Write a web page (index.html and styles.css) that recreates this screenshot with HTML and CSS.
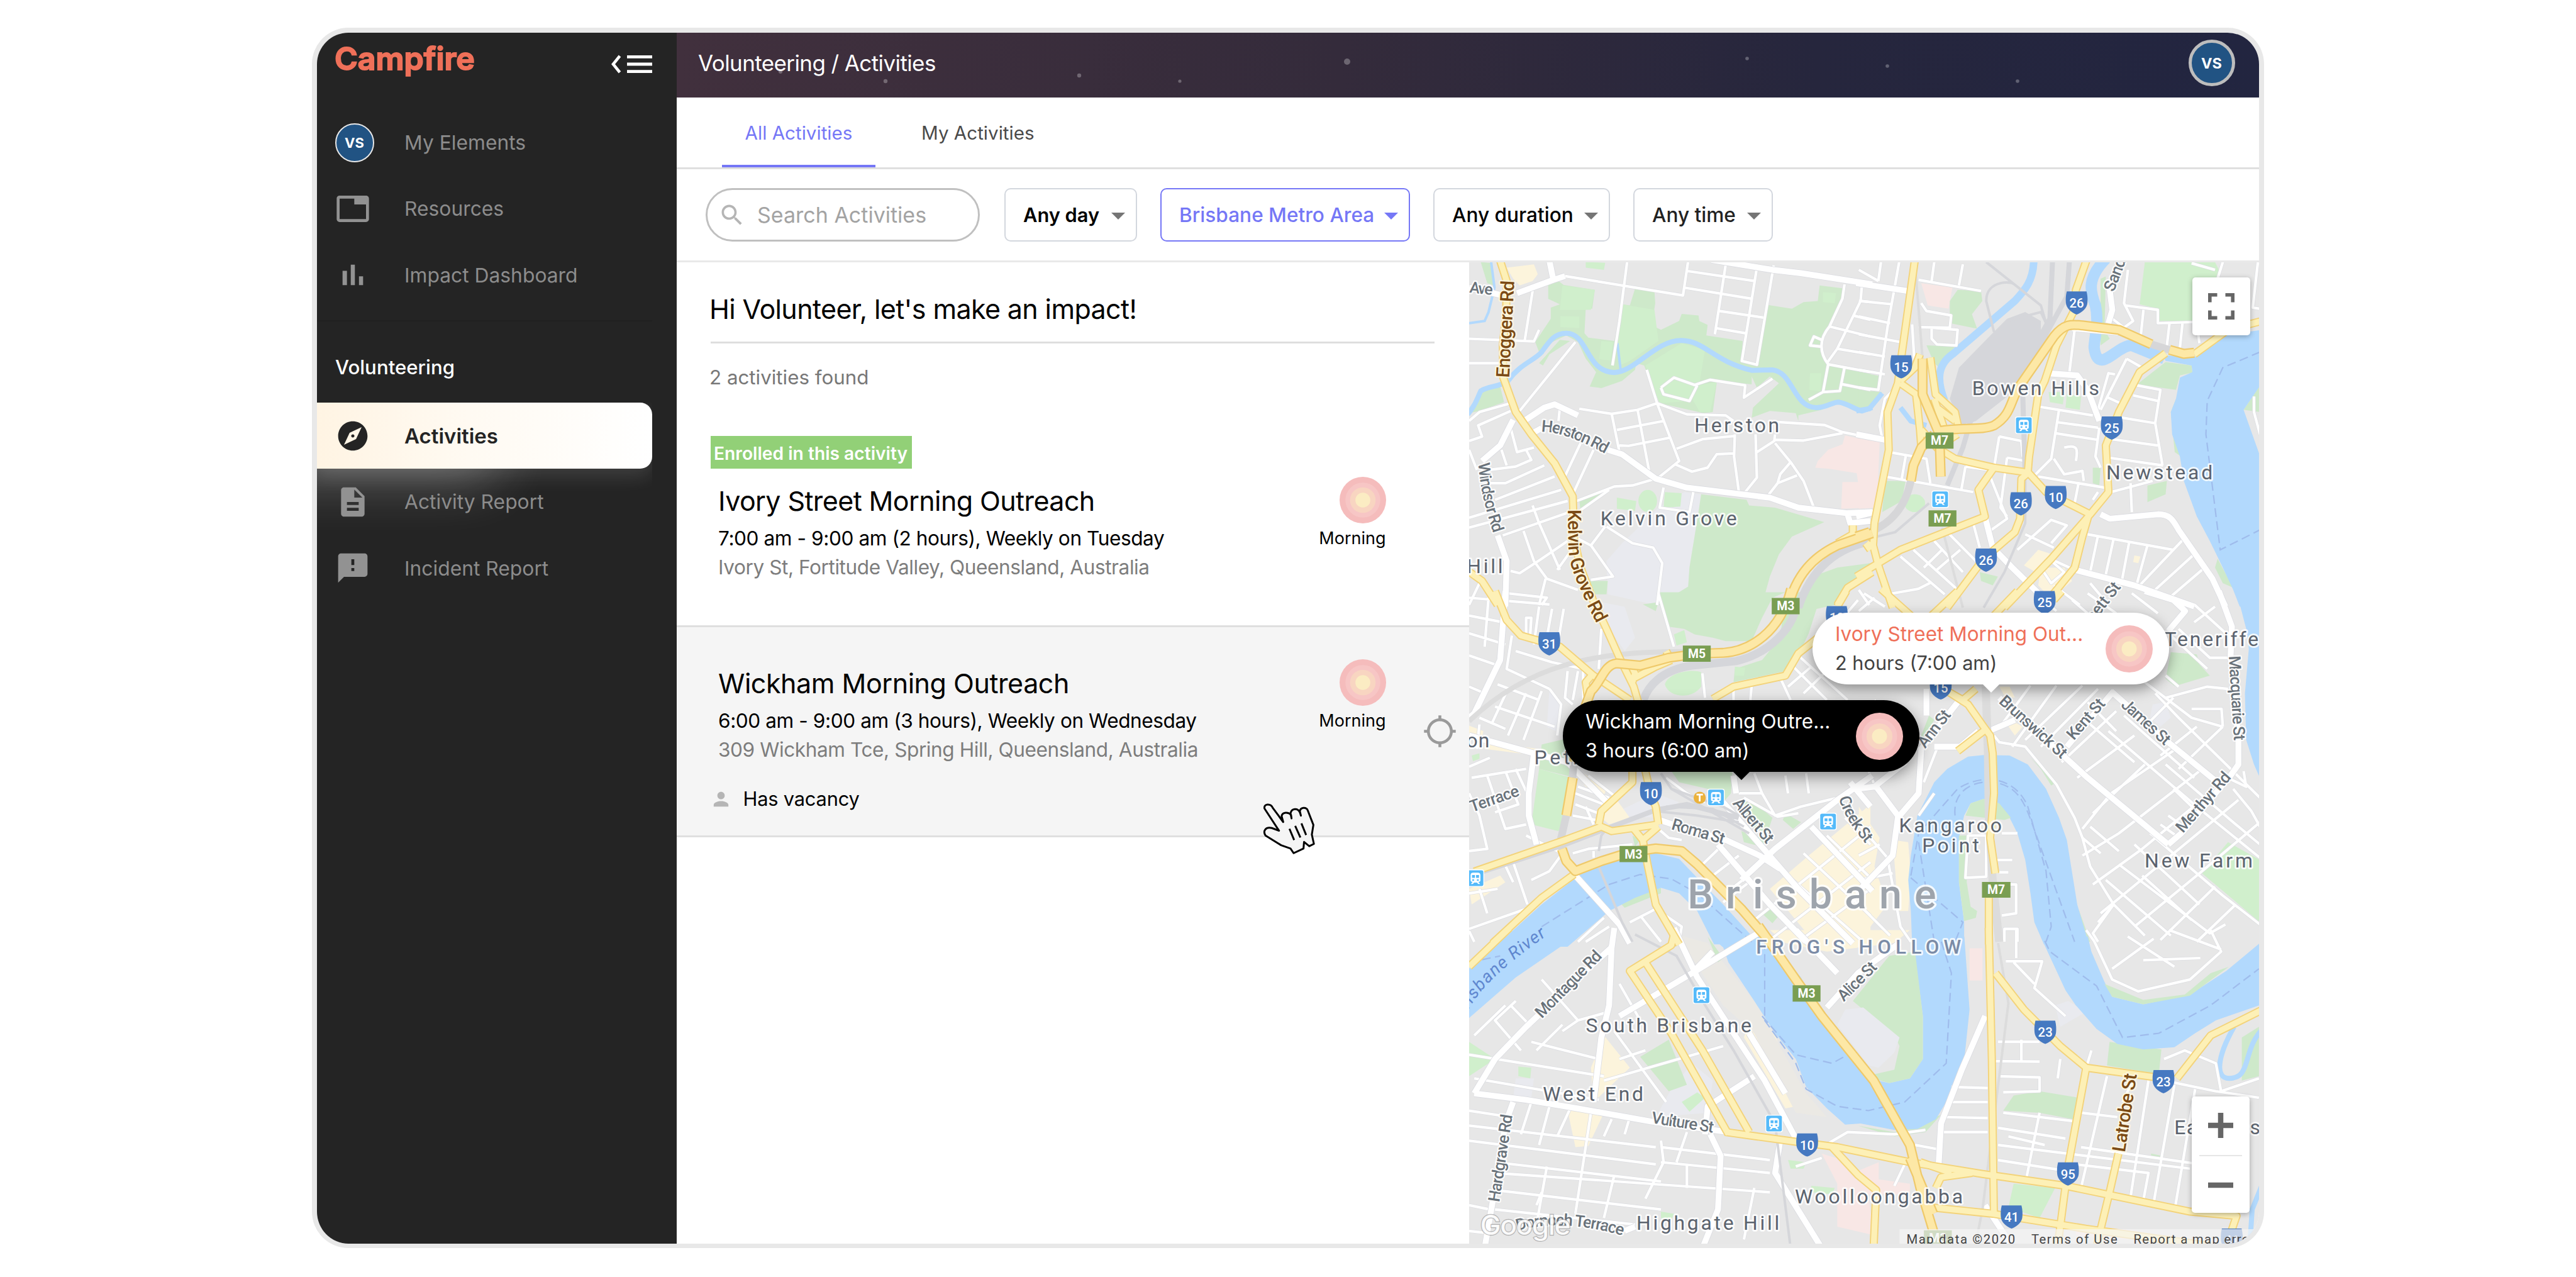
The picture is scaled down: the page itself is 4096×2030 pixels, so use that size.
FILE: index.html
```html
<!DOCTYPE html>
<html lang="en">
<head>
<meta charset="utf-8">
<title>Campfire – Activities</title>
<link rel="stylesheet" href="styles.css">
</head>
<body>
<svg class="defs" width="0" height="0" aria-hidden="true">
  <defs>
    <symbol id="sun" viewBox="0 0 100 100"><circle cx="50" cy="50" r="50" fill="#f5bcbc"/><circle cx="50" cy="50" r="37.5" fill="#f7c6c5"/><circle cx="50" cy="50" r="27.5" fill="#f8d5c1"/><circle cx="50" cy="50" r="16" fill="#fbecc3"/></symbol>
  </defs>
</svg>
<div class="window">
  <aside class="sidebar">
    <div class="brand-row">
      <span class="brand">Campfire</span>
      <svg class="collapse" viewBox="0 0 66 30"><path d="M14.5 2 L4 15 L14.5 28" fill="none" stroke="#fff" stroke-width="4.6"/><path d="M26 3.4H66M26 15H66M26 26.6H66" stroke="#fff" stroke-width="4.8"/></svg>
    </div>
    <nav class="nav">
      <a class="nav-item"><span class="slot"><span class="avatar avatar-sm">VS</span></span>My Elements</a>
      <a class="nav-item"><span class="slot"><svg class="icon" viewBox="0 0 24 24"><path d="M21 3H3c-1.1 0-2 .9-2 2v14c0 1.1.9 2 2 2h18c1.1 0 2-.9 2-2V5c0-1.1-.9-2-2-2zm0 16H3V5h10v4h8v10z"/></svg></span>Resources</a>
      <a class="nav-item"><span class="slot"><svg class="icon" viewBox="0 0 24 24"><path d="M5 9.2h3V19H5V9.2zM10.6 5h2.8v14h-2.8V5zm5.6 8H19v6h-2.8v-6z"/></svg></span>Impact Dashboard</a>
    </nav>
    <h2 class="nav-title">Volunteering</h2>
    <nav class="nav">
      <a class="nav-item active"><span class="slot"><svg class="icon" viewBox="0 0 24 24"><path d="M12 10.9c-.61 0-1.1.49-1.1 1.1s.49 1.1 1.1 1.1c.61 0 1.1-.49 1.1-1.1s-.49-1.1-1.1-1.1zM12 2C6.48 2 2 6.48 2 12s4.48 10 10 10 10-4.48 10-10S17.52 2 12 2zm2.19 12.19L6 18l3.81-8.19L18 6l-3.81 8.19z"/></svg></span>Activities</a>
      <a class="nav-item"><span class="slot"><svg class="icon" viewBox="0 0 24 24"><path d="M14 2H6c-1.1 0-1.99.9-1.99 2L4 20c0 1.1.89 2 1.99 2H18c1.1 0 2-.9 2-2V8l-6-6zm2 16H8v-2h8v2zm0-4H8v-2h8v2zm-3-5V3.500L18.500 9H13z"/></svg></span>Activity Report</a>
      <a class="nav-item"><span class="slot"><svg class="icon" viewBox="0 0 24 24"><path d="M20 2H4c-1.1 0-1.99.9-1.990 2L2 22l4-4h14c1.1 0 2-.9 2-2V4c0-1.1-.9-2-2-2zm-7 12h-2v-2h2v2zm0-4h-2V6h2v4z"/></svg></span>Incident Report</a>
    </nav>
  </aside>

  <main class="main">
    <header class="header">
      <svg class="stars" viewBox="0 0 2516 103" fill="#fff" fill-opacity=".28"><circle cx="165" cy="62" r="3"/><circle cx="332" cy="77" r="3.200"/><circle cx="640" cy="68" r="3.200"/><circle cx="800" cy="77" r="2.600"/><circle cx="1066" cy="46" r="5"/><circle cx="1702" cy="41" r="2.800"/><circle cx="1925" cy="53" r="2.800"/><circle cx="2132" cy="77" r="2.800"/></svg>
      <span class="crumbs">Volunteering / Activities</span>
      <span class="avatar avatar-lg">VS</span>
    </header>
    <div class="tabs"><a class="tab on">All Activities</a><a class="tab">My Activities</a></div>
    <div class="filters">
      <div class="search"><svg viewBox="0 0 24 24"><path d="M15.500 14h-.79l-.28-.27C15.410 12.590 16 11.110 16 9.500 16 5.910 13.090 3 9.500 3S3 5.910 3 9.500 5.910 16 9.500 16c1.610 0 3.090-.59 4.230-1.570l.27.28v.79l5 4.990L20.490 19l-4.990-5zm-6 0C7.010 14 5 11.990 5 9.500S7.010 5 9.500 5 14 7.010 14 9.500 11.990 14 9.500 14z"/></svg>Search Activities</div>
      <div class="chip day">Any day<i class="caret"></i></div>
      <div class="chip area">Brisbane Metro Area<i class="caret"></i></div>
      <div class="chip duration">Any duration<i class="caret"></i></div>
      <div class="chip time">Any time<i class="caret"></i></div>
    </div>

    <div class="content">
      <section class="list">
        <div class="intro">
          <h1>Hi Volunteer, let's make an impact!</h1>
          <p class="found">2 activities found</p>
        </div>
        <article class="card">
          <span class="badge">Enrolled in this activity</span>
          <div class="body">
            <div class="info">
              <h3>Ivory Street Morning Outreach</h3>
              <p class="when">7:00 am - 9:00 am (2 hours), Weekly on Tuesday</p>
              <p class="where">Ivory St, Fortitude Valley, Queensland, Australia</p>
            </div>
            <div class="period"><svg><use href="#sun"/></svg><span>Morning</span></div>
            <div class="locate"></div>
          </div>
        </article>
        <article class="card hover">
          <div class="body">
            <div class="info">
              <h3>Wickham Morning Outreach</h3>
              <p class="when">6:00 am - 9:00 am (3 hours), Weekly on Wednesday</p>
              <p class="where">309 Wickham Tce, Spring Hill, Queensland, Australia</p>
            </div>
            <div class="period"><svg><use href="#sun"/></svg><span>Morning</span></div>
            <div class="locate"><svg viewBox="0 0 24 24"><path d="M20.940 11c-.46-4.170-3.770-7.480-7.940-7.940V1h-2v2.060C6.830 3.520 3.520 6.830 3.060 11H1v2h2.060c.46 4.170 3.770 7.480 7.940 7.940V23h2v-2.060c4.170-.46 7.480-3.770 7.940-7.940H23v-2h-2.060zM12 19c-3.870 0-7-3.130-7-7s3.130-7 7-7 7 3.130 7 7-3.130 7-7 7z"/></svg></div>
          </div>
          <div class="vacancy"><svg viewBox="0 0 24 24"><path d="M12 12c2.210 0 4-1.790 4-4s-1.790-4-4-4-4 1.790-4 4 1.790 4 4 4zm0 2c-2.670 0-8 1.340-8 4v2h16v-2c0-2.660-5.330-4-8-4z"/></svg>Has vacancy</div>
        </article>
      </section>

      <section class="map">
        <svg class="canvas" viewBox="2529 450 1360 1691" preserveAspectRatio="none">
          <defs>
            <g id="arterials">
              <g transform="translate(2520 440) scale(.4464 .3827)">
                <path d="M140 20L165 110L163 250L150 400L152 545L200 700L260 800L350 930L420 1080L425 1270L450 1400L505 1568"/><path d="M10 1410L70 1460L130 1568"/>
                <path d="M1575 1420L1480 1490L1440 1568M1500 1210L1500 1250L1440 1290M1550 1290L1568 1320"/>
              </g>
              <g transform="translate(3200 440) scale(.4476 .3827)">
                <path d="M215 20L165 440L150 570L110 700L115 870L60 1200L55 1300L75 1390L130 1580"/>
                <path d="M875 20L835 150L825 250L760 400L715 560L690 620L655 900L650 970L720 1060L890 1160"/>
                <path d="M655 970L625 1000L620 1180L600 1240L480 1360L340 1580M1550 290L1420 330L1290 440"/>
                <path d="M1180 435L1080 520L1000 700L950 850L960 1060L890 1160L740 1360L560 1580M885 1160L860 1260L830 1400L740 1530L700 1568"/>
                <path d="M640 970L520 950L370 910L300 860M520 950L460 1050L485 1170L160 1320L-10 1440M30 1290L60 1310"/>
                <path d="M160 570L220 620L235 780L240 860M160 560L215 500L235 440M275 455L295 620L370 700L385 780M290 640L330 780M300 680L370 740M240 780L300 860L380 800"/>
              </g>
              <g transform="translate(2520 1020) scale(.4464 .3827)">
                <path d="M120 -10L165 120L220 190L370 240L430 300L500 370L640 480"/>
                <path d="M510 60L550 160L600 290L655 420L675 500L700 800L720 900L740 960L750 1040"/>
                <path d="M650 780L650 850L530 980L520 1040M40 1252L390 1110L530 1050L570 1070L750 1040M655 1060L690 1110L750 1050M690 1110L710 1230L740 1400L830 1580"/>
                <path d="M425 1265L300 1370L110 1575M1475 -10L1440 60M960 475L1040 420L1240 370L1290 270L1420 150M480 490L470 400L500 360M660 380L740 330L800 300M800 300L780 260M640 310L660 360L650 400"/>
              </g>
              <g transform="translate(3200 1020) scale(.4476 .3827)">
                <path d="M85 -20L200 100M380 -10L280 100M610 -10L520 100M780 -10L750 30M450 430L400 480L340 440"/>
                <path d="M340 440L420 500L480 600L505 640L515 720L520 900L505 1100L525 1260M500 1370L500 1580M480 620L380 710"/>
              </g>
              <g transform="translate(2520 1600) scale(.8929 .37)">
                <path d="M88 -10L10 170M405 20L400 70L320 190L400 480L510 950M350 150L460 560L550 940"/>
                <path d="M505 940L640 985L720 1010L860 1080L1000 1135L1160 1190L1400 1310L1490 1330L1480 1400"/>
                <path d="M1012 -10L1018 600L1022 1330M1025 200L1080 370L1150 540L1200 640L1350 690M1375 690L1440 490L1540 370"/>
                <path d="M1200 640L1165 1100L1145 1470M1262 1040L1245 1220L1220 1470M710 1010L760 1140L795 1210L790 1480M900 1290L1020 1320L1200 1390L1440 1470M980 1130L920 1150L910 1200M880 1080L940 1130"/>
              </g>
            </g>
            <g id="motorways">
              <g transform="translate(2520 440) scale(.4464 .3827)"><path d="M1575 1245L1440 1300C1350 1350 1280 1430 1250 1580"/></g>
              <g transform="translate(3200 440) scale(.4476 .3827)">
                <path d="M245 460L245 620L310 800L315 990M310 785C400 765 470 785 520 760C590 710 580 650 620 580L750 360C790 300 820 305 860 310L1000 330L1125 395M1195 420L1250 438L1290 433M290 800L240 860L210 940L200 1010M-10 1260L42 1240"/>
              </g>
              <g transform="translate(2520 1020) scale(.4464 .3827)">
                <path d="M1262 -20C1220 180 1100 260 1000 268L900 272L790 290L680 325L590 315C540 320 530 400 490 440L465 520L425 760M420 830L395 1000M378 1150L395 1205L430 1250L530 1205L640 1165L740 1148L840 1160L900 1220L1070 1420L1190 1580"/>
              </g>
              <g transform="translate(2520 1600) scale(.8929 .37)"><path d="M568 -20L640 230L690 400L790 700L860 1000L880 1200L915 1480M860 1060L905 1320"/></g>
            </g>
            <g id="streets">
              <g transform="translate(2520 440) scale(.4464 .3827)">
                <path d="M390 88L845 175L865 20M630 20L600 290L573 490M860 65L1120 110M850 140L1110 190M985 245L1155 275M1010 35L968 350M970 322L1085 345M1130 50L1072 470L1130 487L1195 40"/>
                <path d="M20 370L270 382L290 330M20 480L140 480M265 155L235 375M445 685L570 708L670 690L745 660M570 708L600 880M670 690L715 970M745 660L830 920L745 1000M745 660L860 710L1010 715L1040 740M590 780L770 740M600 850L635 852L795 815M705 510L745 660M760 590L810 545L890 578L950 555L1085 580L1080 635L1190 550M760 590L770 620L870 650L900 580"/>
                <path d="M820 865L920 822L1040 808M1045 800L1042 900L1060 1055M1040 886L975 890L940 950L880 968L815 935M1125 800L1130 995L1085 1060M1128 882L1197 830L1200 800M1197 825L1310 828L1460 795M1200 840L1260 925L1310 1010L1350 1130M1260 925L1220 980L1210 1020L1170 1080M1210 1020L1285 985M1210 745L1390 758L1460 790L1568 815"/>
                <path d="M1468 125L1460 190L1410 315C1370 370 1370 430 1405 485L1385 610L1450 605L1468 500M1405 485L1568 520M1410 315L1568 360M1530 200L1440 415L1400 480M1440 415L1568 440M1535 130L1530 200L1568 205M1500 265L1568 285M1460 575L1568 600M1385 610L1330 645M1375 405L1335 400L1350 360L1380 375"/>
                <path d="M435 1100L580 1035L650 1030L740 1000M440 1150L560 1050M20 740L60 700L180 660M20 1175L375 1050M20 1220L400 1100M150 1255L420 1145M100 960L200 945L260 915L240 870M100 1020L160 1020L310 940M120 1095L350 990M20 830L70 810L55 760L180 695M180 770L205 880L270 860M145 870L165 940M500 870L420 1070M450 840L385 1000M370 680L365 740M20 870L50 960M430 385L215 695"/>
                <path d="M440 1270L490 1300L575 1440L490 1455M545 1215L490 1300M550 1215L650 1290L730 1310L765 1380L745 1568M400 1280L300 1360L215 1425L180 1415M230 1235L270 1370L320 1450L440 1500M265 1120L290 1200L370 1410M165 1515L320 1535L300 1568M770 1040L755 1130L870 1150L885 1060M315 1450L290 1568M60 1470L20 1568M440 1280L360 1410"/>
              </g>
              <g transform="translate(3200 440) scale(.4476 .3827)">
                <path d="M85 25L75 110M155 25L110 320L75 600L0 590M0 60L75 110M0 200L130 215M0 270L120 300M0 350L160 385M0 430L100 450M0 510L100 530M230 105L470 155M290 25L280 110M400 35L385 130M240 210L260 245L355 265L350 320L230 318M280 320L380 330L375 400L300 395L280 370Z"/>
                <path d="M115 880L260 910L275 1020M100 990L440 1060M180 900L165 1000M410 945L395 1045M410 945L500 960M505 990L570 1180L510 1230M540 810L520 950M540 810L625 830L630 900M150 580L100 640L80 760L90 820M570 905L545 1130L570 1170M570 905L640 920M205 305L215 500"/>
                <path d="M830 330L810 520M690 675L900 715M770 690L740 910L680 980M760 745L920 770M755 795L920 825M925 770L910 900L930 950M690 990L945 1040M845 1020L830 1110M880 1250L1210 1320M920 1255L890 1420M980 1270L950 1430M1040 1285L1010 1470M1110 1300L1070 1470M1250 1270L1080 1480M1290 1340L1130 1510M1330 1400L1200 1530M735 1360L830 1410M970 1060L1130 1010M1045 1020L1050 1150M960 905L1170 940M960 820L1150 850M1010 725L1140 750L1168 940M1140 750L1160 600L1070 580M1055 625L1150 650M950 630L1005 660M920 690L960 525L985 530M1030 460L930 690M1030 460L1090 500M820 330L1010 350"/>
                <path d="M975 280L1020 320L1055 290L1020 210L1035 60M1025 220L1150 240L1150 300L1290 295M1095 240L1085 350M1195 300L1185 400M1245 300L1235 410M1300 300L1310 390M1400 25L1380 100M1370 60L1280 30M1535 25L1515 230L1543 235M1520 630L1520 700L1543 800"/>
                <path d="M160 1350L330 1520M210 1320L390 1510M340 1240L450 1370M290 1280L400 1420M320 1320L250 1400M390 1320L300 1410M610 1320L740 1185L800 1210L740 1290M640 1250L750 1310M440 1200L465 1310M110 1520L230 1495L280 1465M0 1500L40 1568M750 1480L850 1568M890 1470L960 1568M700 1400L740 1370L790 1420L740 1470Z"/>
                <path d="M790 860C850 840 840 880 835 920M750 910L790 980L860 965L865 1010M920 1060L900 1095"/>
              </g>
              <g transform="translate(2520 1020) scale(.4464 .3827)">
                <path d="M20 100L150 130M20 180L160 230M20 280L120 320M20 420L80 450M185 190L165 340L330 430M240 190L240 110L260 110L255 200M290 60L270 230M340 70L315 230M385 70L360 240M200 260L340 310L460 340M120 510L350 600M130 410L290 480M170 430L110 580M240 450L170 640M300 440L230 660M330 430L375 500L360 640M400 350L390 470L420 500M440 350L420 480M60 590L50 700M60 560L160 610M530 160L520 340M460 340L460 480M20 20L330 50M95 20L80 240"/>
                <path d="M20 780L100 740M30 830L240 790M20 900L60 1000L90 1150L20 1160M90 820L160 1060L240 1040M160 800L210 950L120 985M200 790L240 890M190 1210L245 1400M150 1200L190 1300M20 1350L130 1330M60 1330L90 1440M20 1510L240 1420M430 900L540 950M430 950L520 990M420 1000L510 1020M480 820L590 920M440 870L560 920M470 960L500 1040M380 1170L330 1250L260 1290M240 1090L380 1170"/>
                <path d="M1120 810L1150 900L1200 1000L1300 960L1440 920M1150 900L1060 900M1240 820L1250 900M1320 810L1330 900M1080 920L1210 1005L1290 990M1040 420L1040 480M1110 410L1105 480M1220 380L1260 480M1290 280L1480 480M1270 330L1400 480M1390 360L1310 450M1340 330L1250 420M750 0L810 240M920 360L930 470M1460 60L1568 200M1500 100L1568 180M1520 30L1440 140M780 830L860 900L930 940M750 1060L790 1100L840 1110"/>
                <path d="M920 1220L1000 1130M960 1270L1060 1180M1020 1340L1120 1250M1000 1390L1100 1300M420 1170L480 1150L650 1130M500 1190L500 1160M640 1480L740 1420M680 1450L760 1568M740 1420L840 1500L830 1568M440 1568L540 1460M470 1568L560 1500M40 1568L20 1520M1110 1480L1568 1050M1180 1560L1568 1210M1290 1568L1568 1330M1230 1250L1540 1568M1310 1170L1568 1450M1400 1090L1568 1280M1470 1010L1568 1130"/>
              </g>
              <g transform="translate(3200 1020) scale(.4476 .3827)">
                <path d="M0 1040L110 1190L160 1500L200 1568M520 640L540 670L640 690L760 860L830 1010L860 1100L890 1230L980 1400L1100 1540M0 700L60 860M20 620L100 760M60 480L230 700M300 700L250 850M230 1000L290 900M0 1180L80 1130M0 1290L130 1260M0 1400L120 1540"/>
                <path d="M1310 800L1000 1080L860 1180M1380 870L1090 1150L900 1310M1460 930L1180 1200L930 1440M1543 1030L1310 1260L1060 1500M1370 1320L1160 1560M1450 1400L1300 1568M1220 700L970 900L860 1060M1100 770L900 990M1060 640L840 830M990 530L780 760M760 415L590 690M660 415L550 590M860 415L640 660M920 430L700 690M860 560L1060 760M880 490L990 620M960 620L1300 960L1543 1190M1020 550L1290 830"/>
                <path d="M1000 1220L1350 1530L1410 1490M950 1290L1200 1540M1090 1270L1280 1470M1140 1100L1400 1360L1543 1490M1060 1130L1310 1400M890 1050L1000 1160M860 1100L930 1170M1180 770L1440 1030L1543 1130M1210 880L1290 970M980 1400L920 1480M1120 1080L1180 1130M1160 1040L1220 1090M1190 1000L1250 1050M980 1400L900 1530L920 1568"/>
                <path d="M1230 160L1350 290L1430 290M1290 50L1440 210M1180 470L1340 420L1420 430M1100 400L1280 560L1400 600M1280 520L1395 520L1400 600M1140 450L1230 560L1543 920M1400 600L1230 790M1210 470L1100 600M1300 600L1160 730M1543 1050L1510 980L1440 880M1400 820L1490 870L1480 800M1370 60L1290 130M1180 370L1230 420M1190 180L1340 340"/>
                <path d="M420 1090L410 1280L490 1275L490 1090ZM530 1200L590 1200M540 1255L575 1255M550 1310L605 1310L605 1440L550 1450M550 1080L610 1080M560 1568L560 1510L610 1510L610 1568M0 80L60 20M100 60L20 0M700 20L760 80M820 30L880 90M880 0L990 90M1050 0L1150 90"/>
              </g>
              <g transform="translate(2520 1600) scale(.8929 .37)">
                <path d="M10 580L270 680M20 690L260 790M270 700L500 540M290 470L390 800M300 600L350 560M100 330L60 420L110 560M20 490L80 350M90 350L130 450M150 230L220 420L280 380M130 520L260 600M190 440L140 560M10 910L370 1010M10 980L370 1090M60 1080L380 1170M60 1130L590 1220M60 1210L380 1300M60 1300L330 1370M380 1010L590 1070M380 1080L590 1130M10 840L90 870M10 1280L50 1300M10 1400L45 1410"/>
                <path d="M130 800L110 950M165 820L145 1000M205 830L180 960M245 850L215 1320M380 980L385 1080L350 1250M320 870L310 950M560 1200L540 1440M430 1090L430 1200M290 1140L270 1340M160 1100L140 1370M430 940L410 1080M285 880L270 960M640 1100L690 1060M690 1010L740 940L830 950L890 930M300 250L340 420M220 420L190 470"/>
                <path d="M1030 520L1110 520M1020 610L1110 612M1030 680L1110 685L1110 750L1040 755M1075 510L1075 610M940 730L1010 735M935 800L1010 800M925 870L1010 875M920 940L1010 940M1040 850L1180 890M1030 920L1160 970M1030 1000L1400 1110M1030 1070L1160 1120M1050 960L1120 1000M1110 850L1085 1150M1150 600L1145 690M1210 560L1200 640M1240 680L1190 1200M1290 700L1270 800M1320 700L1285 1250M1370 720L1330 1270M1410 740L1370 1310M1190 1010L1420 1090M1180 1090L1320 1130L1310 1260M1190 850L1260 870M1350 700L1450 750L1533 780M1350 600L1390 560L1450 620L1460 750L1533 690"/>
                <path d="M1215 50L1250 230L1300 285L1400 230L1460 100L1440 0M1250 180L1330 40M1280 30L1370 170M1310 140L1420 130M1360 0L1460 90M1200 0L1215 50M1045 145L1115 145L1100 270L1160 400M1060 150L1100 250M1065 0L1065 130M870 1000L915 1020L920 1090M850 1090L830 1190M150 1220L140 1280"/>
              </g>
            </g>
            <g id="roads">
              <g transform="translate(2520 440) scale(.4464 .3827)"><path d="M260 798L300 772M555 870L610 890L740 1000L860 1040L1180 1085L1290 1130L1480 1155L1575 1150M205 165L345 105L330 20M345 105L390 88M955 15L1190 60L1300 75L1575 125M20 140L150 175M190 735L140 850L70 920M130 1255L165 1370L160 1575M225 745L310 680L350 665L440 715M1480 1160L1490 1200L1568 1190"/></g>
              <g transform="translate(3200 440) scale(.4476 .3827)"><path d="M-10 120L190 155M-10 800L100 825M485 1170L515 1310L590 1400L730 1560M720 525L840 535L880 600L925 740M930 1160L965 1180L1150 1160C1200 1160 1210 1190 1230 1230L1360 1450L1410 1575M830 1410L1060 1480L1290 1575M965 150L975 240L960 300M-10 1170L60 1150"/></g>
              <g transform="translate(2520 1020) scale(.4464 .3827)"><path d="M160 -10L140 300L40 540L20 560M20 640L270 720L250 900L250 1000L280 1130M270 720L400 760L560 950M430 1270L600 1490L640 1575M755 1020L830 1050L1010 1110L1140 1180L1220 1240M1040 820L1050 900M1000 940L1290 1330L1500 1575M1070 1290L1200 1150L1440 930L1575 820M980 1130L1180 1400L1320 1568M1340 1050L1575 1340M1490 850L1568 960"/></g>
              <g transform="translate(3200 1020) scale(.4476 .3827)"><path d="M540 470L880 830L1190 1130M970 440L1200 680L1400 870M1190 1130L1240 1080L1430 820L1460 770L1460 660L1430 280L1435 150L1385 -10M1100 -10L1210 30L1255 80L1190 170M-10 880L60 870L180 760M60 860L150 1000M380 490L240 700L230 900L150 1010L130 1180L-10 1350M290 690L390 690L460 620M600 570L500 620M980 440L800 690M260 430L260 550"/></g>
              <g transform="translate(2520 1600) scale(.8929 .37)"><path d="M570 10L440 200L300 400M440 200L480 100M290 -10L285 80L230 200L120 450L60 600L20 760M20 760L120 790L220 830L360 890L510 940M405 -10L450 220L520 480L580 700L640 970M95 800L80 900L60 1200L40 1480M475 950L495 1050L490 1300L460 1480M610 980L600 1130L690 1480M560 680L470 820L465 950M285 70L280 350L265 500L250 800M550 480L620 760M700 360L760 200L840 60M640 0L720 200M1005 400L960 650L920 900L915 1110M330 1380L310 1400M1005 1280L1060 1480"/></g>
            </g>
          </defs>

          <rect class="land" x="2529" y="450" width="1360" height="1691"/>

          <g class="dev">
            <g transform="translate(2520 440) scale(.4464 .3827)"><path class="campus" d="M850 1060L915 1070L905 1150L870 1400L865 1485L800 1530L740 1568L555 1520L550 1370L610 1290L690 1200L750 1130Z"/><path class="clinic" d="M1470 805L1568 830L1568 1130L1455 1135L1460 1015L1520 1015L1515 975L1410 955L1355 950L1365 920L1405 870L1460 845Z"/><path class="shops" d="M165 50L270 35L285 80L265 110L215 130L190 100Z"/></g>
            <g transform="translate(3200 440) scale(.4476 .3827)"><path class="clinic" d="M240 120L360 140L345 235L265 220ZM0 820L80 835L70 1130L0 1135Z"/><path class="shops" d="M690 1320L745 1340L680 1420L635 1390ZM700 1400L790 1400L820 1460L740 1540L690 1480ZM1060 1345L1083 1350L1075 1380L1055 1375Z"/>
              <path class="yard" d="M350 640L385 500L510 350L570 280L640 250L700 290L700 380L640 560L560 640L450 740L390 760Z"/></g>
            <g transform="translate(2520 1020) scale(.4464 .3827)"><path class="campus" d="M530 40L620 60L660 200L620 260L560 160ZM330 430L375 510L355 620L320 600ZM560 1000L740 900L830 940L740 1010Z"/><path class="shops" d="M20 595L75 620L70 650L20 635ZM80 670L290 700L280 730L80 700ZM520 1000L590 930L640 1010L560 1040ZM1180 1330L1330 1180L1568 950L1568 1568L1350 1568ZM20 1330L140 1270L160 1300L30 1400ZM410 770L550 880L540 910L470 870Z"/></g>
            <g transform="translate(3200 1020) scale(.4476 .3827)"><path class="shops" d="M130 1110L190 1120L200 1280L190 1430L150 1430L140 1250ZM0 960L80 1100L60 1230L110 1400L0 1568ZM570 560L630 600L600 640L570 590ZM540 420L580 420L600 470L560 460Z"/><path class="campus" d="M1130 500L1180 490L1200 560L1160 600L1120 560Z"/></g>
            <g transform="translate(2520 1600) scale(.8929 .37)"><path class="shops" d="M270 490L320 640L250 800L245 640ZM200 840L270 850L240 1005L215 1010ZM550 420L600 480L640 820L620 830L540 500ZM590 0L860 0L830 60L700 100L620 60Z"/><path class="civic" d="M410 20L470 60L560 330L600 500L660 760L700 870L640 850L560 480L500 350Z"/><path class="campus" d="M440 620L480 700L470 850L370 870L400 740ZM100 690L135 690L130 780L95 780ZM1140 350L1165 330L1200 380L1150 450Z"/><path class="clinic" d="M690 1040L730 1070L760 1120L800 1080L800 1160L860 1180L860 1230L780 1230L790 1420L720 1380L720 1180ZM975 85L1000 85L1000 235L975 235ZM1180 1370L1300 1400L1280 1440L1180 1420Z"/></g>
          </g>

          <g class="parks">
            <g transform="translate(2520 440) scale(.4464 .3827)">
              <path d="M325 125L365 110L385 128L505 150L495 235L470 232L465 345L480 365L580 380L610 215L640 220L660 145L735 155L738 210L725 310L760 330L830 290L840 258L905 265L908 290L940 308L935 355L1075 380L1070 470L1130 490L1160 275L1172 218L1265 235L1310 205L1365 200L1372 130L1460 143L1465 180L1400 330L1375 400L1400 485L1568 520L1568 690L1530 700L1440 655L1380 690L1290 715L1290 740L1280 705L1180 695L1110 725L1115 680L1215 570L1180 540L1130 590L1110 540L1110 575L960 555L975 570L960 700L925 705L755 660L695 490L665 480L660 510L610 560L530 592L485 585L510 520L470 460L440 385L395 355L340 385L290 430L275 385L335 280L335 230L370 215L325 190Z"/>
              <path d="M915 1070L1090 1095L1100 1120L1200 1130L1390 1195L1265 1260L1215 1340L1180 1440L1150 1568L750 1568L865 1485L870 1400L905 1150ZM65 605L140 585L155 655L60 695L20 705L50 660ZM290 480L370 375L410 380L330 440L305 490ZM65 25L110 30L115 130L90 120ZM445 1100L560 1050L450 1140ZM485 1460L555 1460L550 1520L500 1520ZM1345 1440L1440 1400L1568 1380L1568 1420L1480 1490L1430 1568L1290 1568L1310 1500Z"/>
              <path class="lawn" d="M380 130L505 150L490 240L370 240ZM372 268L445 270L445 322L372 318ZM610 215L735 240L750 380L640 470L600 490L590 400ZM530 380L575 385L565 468L522 462ZM700 490L840 390L930 420L910 560L870 650L755 660ZM900 580L975 565L950 700L910 700L880 640ZM470 25L545 28L540 60L470 50ZM590 1085L665 1100L660 1145L590 1135ZM775 1060L840 1065L835 1125L770 1130ZM1335 525L1378 525L1375 605L1332 600ZM1385 160L1435 165L1430 210L1385 205Z"/>
              <ellipse class="lawn" cx="709" cy="1100" rx="36" ry="50"/>
            </g>
            <g transform="translate(3200 440) scale(.4476 .3827)">
              <path d="M350 200L380 150L470 155L475 200L435 260L455 325L350 300ZM1070 575L1180 475L1280 490L1283 522L1235 535L1220 600ZM0 520L90 540L75 600L0 590ZM0 600L90 610L40 680L0 680ZM260 400L370 405L310 500L290 480ZM100 1010L180 1010L165 1100L90 1150ZM1110 1030L1185 1010L1180 1070L1110 1105ZM465 1420L535 1440L515 1480L470 1460ZM1220 640L1240 900L1215 880L1200 700ZM1380 1360L1440 1490L1400 1470L1370 1400ZM930 100L950 90L945 330L965 370L930 400ZM1543 580L1480 690L1543 700ZM900 950L930 950L925 1030L900 1020ZM-5 1400L40 1380L40 1400L-5 1420Z"/>
              <path class="lawn" d="M1100 25L1370 25L1385 60L1400 290L1150 290L1150 235L1080 215ZM730 610L790 610L785 665L735 655ZM800 620L855 630L850 690L795 680Z"/><ellipse class="lawn" cx="215" cy="1110" rx="40" ry="40"/>
            </g>
            <g transform="translate(2520 1020) scale(.4464 .3827)">
              <path d="M300 680L410 650L430 830L290 790ZM800 800L1035 805L1030 900L1000 940L940 880L830 850ZM1070 930L1140 960L1190 1010L1170 1080L1110 1050ZM1070 1070L1170 1110L1150 1140L1080 1120ZM1240 -5L1470 -5L1440 50L1360 70L1330 180L1290 280L1240 350L1040 400L1045 340L1150 300L1220 200ZM750 -5L1240 -5L1190 20L1150 110L1110 215L1010 215L960 200L890 185L850 160L790 150ZM600 1390L760 1325L760 1350L620 1415ZM1150 1440L1180 1410L1215 1450L1190 1485ZM650 1090L680 1110L660 1140ZM1240 990L1300 1030L1270 1060L1230 1020ZM690 50L750 40L740 80Z"/>
              <path class="lawn" d="M290 790L415 830L395 1000L365 1070L260 1040ZM775 410C790 350 890 340 915 355L915 420C880 480 790 470 775 410ZM810 185L850 165L860 220L820 235ZM30 730L60 720L60 745L35 755ZM1045 330L1085 335L1080 370L1045 370Z"/>
            </g>
            <g transform="translate(3200 1020) scale(.4476 .3827)">
              <path d="M1200 265L1300 275L1310 320L1350 370L1215 418L1180 385ZM660 740L760 850L740 865L700 790ZM270 550L290 570L245 660L240 640ZM845 1420L890 1568L870 1568Z"/>
              <path class="lawn" d="M1420 1120L1543 1200L1543 1480L1320 1260Z"/>
            </g>
            <g transform="translate(2520 1600) scale(.8929 .37)">
              <path d="M340 590L395 510L430 720L395 750ZM1245 520L1345 555L1340 670L1240 630ZM1060 770L1110 750L1185 780L1175 880L1110 850L1040 840ZM760 910L830 940L920 860L890 940L830 960ZM470 30L500 130L490 150ZM1500 500L1533 450L1533 680L1500 700ZM1325 1040L1345 1050L1340 1070L1325 1060Z"/>
              <path class="lawn" d="M10 520L60 600L10 680ZM105 635L130 640L128 690L105 680ZM420 800L450 755L465 780L435 845ZM1060 1180L1140 1200L1110 1340L1050 1290ZM625 1070L660 1080L655 1110L630 1110ZM670 1190L715 1200L710 1230L670 1220ZM380 1310L405 1320L400 1350L380 1340Z"/>
            </g>
          </g>

          <g class="water">
            <g transform="translate(3200 440) scale(.4476 .3827)"><path d="M1550 330L1400 355L1350 400L1300 450L1170 445L1180 470L1280 490L1283 520L1235 545L1220 640L1200 700L1205 800L1235 900L1250 1010L1300 1170L1350 1280L1400 1400L1440 1500L1465 1575L1550 1575L1550 920L1480 690L1550 570Z"/></g>
            <g transform="translate(2520 1020) scale(.4464 .3827)"><path d="M120 1590L300 1400L420 1290L440 1270L560 1200L740 1170L830 1195L900 1280L1000 1400L1140 1580L965 1580L900 1430L830 1350L760 1325L660 1370L560 1430L400 1590Z"/></g>
            <g transform="translate(3200 1020) scale(.4476 .3827)"><path d="M205 1580L200 1430L190 1290L200 1180L225 1000L260 920L290 850L340 790L420 735L480 728L580 730L650 770L720 880L770 1010L800 1110L825 1290L840 1400L885 1580L712 1580L675 1480L660 1350L640 1200L610 1080L580 1010L540 950L480 925L430 945L405 1000L385 1100L385 1300L405 1480L405 1580ZM1450 -20L1550 -20L1550 850L1520 770L1490 660L1485 450L1500 250L1490 160Z"/></g>
            <g transform="translate(2520 1600) scale(.8929 .37)"><path d="M80 30L0 200L0 430L100 220L215 30ZM475 30L500 80L510 150L560 330L600 480L640 600L660 730L700 830L735 905L765 900L830 930L875 925L910 880L940 760L965 600L975 370L965 30L865 30L870 120L885 400L885 600L860 690L820 712L780 690L745 600L720 500L690 400L650 220L600 80L572 30ZM1112 30L1203 30L1210 100L1235 240L1250 310L1310 345L1400 300L1470 190L1540 50L1540 345L1450 420L1410 480L1370 545L1310 555L1260 530L1220 460L1180 350L1160 280L1135 150Z"/></g>
          </g>
          <g class="parks">
            <g transform="translate(3200 1020) scale(.4476 .3827)"><path d="M410 1000L430 945L480 925L540 945L585 1010L560 1020ZM385 1090L420 1090L415 1300L430 1410L455 1430L450 1460L405 1475L385 1300Z"/></g>
            <g transform="translate(2520 1600) scale(.8929 .37)"><path d="M870 100L885 400L885 600L860 690L820 712L775 680L830 650L840 540L830 490L750 330L820 120ZM1235 250L1250 310L1310 345L1400 305L1475 170L1440 200L1390 300L1310 325Z"/><path class="campus" d="M735 370L770 360L840 500L830 570L800 640L780 630L720 440Z"/></g>
          </g>
          <g class="creeks">
            <g transform="translate(2520 440) scale(.4464 .3827)"><path d="M15 710C50 660 50 640 65 605C100 580 130 590 170 560C220 480 270 470 300 430C330 380 350 345 395 345C480 345 470 520 580 522C660 520 740 375 840 378C930 380 960 470 1110 512L1190 510C1270 520 1270 680 1360 680C1400 680 1420 655 1445 655C1480 660 1510 690 1535 695L1575 680"/><path class="thin" d="M105 25L118 140L95 250L80 290L20 300M592 390L605 515"/></g>
            <g transform="translate(3200 440) scale(.4476 .3827)"><path d="M-10 695L40 685L90 615M160 680L200 740L260 760"/><path class="wide" d="M673 20C670 110 640 150 600 200L360 440C300 490 300 560 330 650"/><path class="wider" d="M950 10C875 100 890 160 910 220C925 300 905 370 905 410C920 540 990 400 1050 400L1175 460"/></g>
            <g transform="translate(2520 1600) scale(.8929 .37)"><path d="M1485 450C1450 600 1450 690 1475 690C1520 690 1500 560 1540 460M1540 1180L1520 1300L1515 1480"/></g>
          </g>

          <g class="ferry">
            <g transform="translate(3200 440) scale(.4476 .3827)"><path d="M1543 430L1400 500L1340 650L1335 800L1390 1320L1543 1230"/></g>
            <g transform="translate(2520 1020) scale(.4464 .3827)"><path d="M300 1500L560 1310L680 1265L800 1285L900 1350L1110 1568"/></g>
            <g transform="translate(3200 1020) scale(.4476 .3827)"><path d="M200 1270L230 1080L380 880C470 810 600 820 650 960L720 1250L740 1500L720 1568M370 1000C360 880 450 840 520 850C620 870 640 950 680 1080L830 1568M230 1120L290 1568M200 1280L400 1480L370 1568"/></g>
            <g transform="translate(2520 1600) scale(.8929 .37)"><path d="M580 50L580 420L640 620L660 740L720 820L780 840L850 800L930 620L940 200L920 50M575 400L640 580L710 620L740 580M1120 50L1130 100L1220 260L1270 500L1340 480L1440 350L1533 180M10 150L70 120"/></g>
          </g>

          <use href="#streets" class="street-edge"/><use href="#streets" class="street"/>
          <use href="#roads" class="road-edge"/><use href="#roads" class="road"/>

          <g class="rail">
            <g transform="translate(3200 440) scale(.4476 .3827)"><path class="fat" d="M745 20L735 280L640 480L560 600L430 740L400 860L340 1030M810 20L800 180L720 350L630 600L640 1000"/><path d="M640 1000L640 1200L560 1420L480 1580M490 25L700 220L720 300M520 340L490 200C490 100 600 110 600 130M570 290L700 250L720 300M0 1280L140 1240L270 1110"/><path class="tunnel" d="M215 20L245 460M320 1220L400 1580"/></g>
            <g transform="translate(2520 440) scale(.4464 .3827)"><path class="band" d="M1575 1280C1440 1310 1340 1400 1290 1580"/></g>
            <g transform="translate(2520 1020) scale(.4464 .3827)"><path class="band" d="M1285 30C1280 150 1180 270 1050 305L880 325C760 345 710 420 692 480"/><path class="fat" d="M15 1275L390 1130L740 975L860 950L1060 1010"/><path d="M760 810L800 880L1100 1080M780 960L960 970L1080 1050M740 980L900 1000L1060 1030M800 880L1000 960L1060 1000M520 1230L610 1480L650 1568M520 1160L530 1090L550 1060"/><path class="tunnel fat" d="M20 575C250 320 500 262 850 262"/><path class="bridge" d="M425 755L418 835M395 1000L375 1100L380 1160"/></g>
            <g transform="translate(3200 1020) scale(.4476 .3827)"><path class="tunnel band" d="M488 420L497 730L500 1000L515 1300L540 1568"/></g>
            <g transform="translate(2520 1600) scale(.8929 .37)"><path d="M330 20L410 120L460 330L520 560L600 900L630 1480"/><path class="tunnel" d="M1030 60L1050 340L1000 1300L985 1480"/></g>
            <g transform="translate(3200 440) scale(.4476 .3827)"><path class="bridge" d="M1118 392L1200 422M200 1010C180 1120 130 1200 40 1240"/></g>
          </g>

          <use href="#arterials" class="arterial-edge"/><use href="#arterials" class="arterial"/>
          <use href="#motorways" class="motorway-edge"/><use href="#motorways" class="motorway"/>

          <g class="label road-label">
            <text transform="translate(2529 502) rotate(6)" font-size="27" textLength="40">Ave</text>
            <text transform="translate(2534 1397) rotate(-19.300)" textLength="88">Terrace</text>
            <text transform="translate(2876 1426) rotate(16.200)" textLength="94">Roma St</text>
            <text transform="translate(2982 1382) rotate(50)" textLength="92">Albert St</text>
            <text transform="translate(3314 1288) rotate(-52)" textLength="74">Ann St</text>
            <text transform="translate(3440 1208) rotate(42)" textLength="146">Brunswick St</text>
            <text transform="translate(3570 1274) rotate(-48.600)" textLength="84">Kent St</text>
            <text transform="translate(3650 1214) rotate(42)" textLength="103">James St</text>
            <text transform="translate(3837 1128) rotate(86.500)" textLength="146">Macquarie St</text>
            <text transform="translate(3758 1434) rotate(-49)" textLength="128">Merthyr Rd</text>
            <text transform="translate(3174 1724) rotate(-45)" textLength="83">Alice St</text>
            <text transform="translate(2654 1753) rotate(-45.500)" textLength="150">Montague Rd</text>
            <text transform="translate(2581 2069) rotate(-81.400)" textLength="152">Hardgrave Rd</text>
            <text transform="translate(2842 1932) rotate(9)" textLength="108">Vulture St</text>
            <text transform="translate(3639 502) rotate(-69)" textLength="88">Sandga</text>
            <text transform="translate(3604 1071) rotate(-52)" textLength="78">nett St</text>
            <path id="herston" d="M2653 742Q2690 740 2762 779" fill="none"/><text textLength="118"><textPath href="#herston">Herston Rd</textPath></text>
            <path id="windsor" d="M2545 796Q2548 850 2572 920" fill="none"/><text textLength="124"><textPath href="#windsor">Windsor Rd</textPath></text>
            <path id="creek" d="M3166 1372Q3172 1405 3216 1456" fill="none"/><text textLength="92"><textPath href="#creek">Creek St</textPath></text>
            <path id="dornoch" d="M2612 2118Q2690 2095 2800 2128" fill="none"/><text textLength="184"><textPath href="#dornoch">Dornoch Terrace</textPath></text>
          </g>
          <g class="label arterial-label">
            <text transform="translate(2598 649) rotate(-87)" textLength="167">Enoggera Rd</text>
            <text transform="translate(3658 1983) rotate(-81.300)" textLength="136">Latrobe St</text>
            <path id="kelvin" d="M2699 876L2700 940C2702 985 2722 1010 2732 1040L2754 1082" fill="none"/><text textLength="206"><textPath href="#kelvin">Kelvin Grove Rd</textPath></text>
          </g>
          <g class="label river-label"><path id="river" d="M2519 1754C2545 1698 2590 1660 2690 1590" fill="none"/><text textLength="206"><textPath href="#river">Brisbane River</textPath></text></g>
          <g class="label suburb">
            <text x="2917" y="743" textLength="146">Herston</text>
            <text x="2755" y="903" textLength="235">Kelvin Grove</text>
            <text x="2525" y="985" textLength="62">Hill</text>
            <text x="3395" y="679" textLength="219">Bowen Hills</text>
            <text x="3626" y="824" textLength="183">Newstead</text>
            <text x="3726" y="1111" textLength="162">Teneriffe</text>
            <text x="3269" y="1431" textLength="177">Kangaroo</text>
            <text x="3309" y="1466" textLength="98">Point</text>
            <text x="3692" y="1492.500" textLength="186">New Farm</text>
            <text x="2730" y="1776" textLength="285">South Brisbane</text>
            <text x="2656" y="1894" textLength="173">West End</text>
            <text x="3090" y="2070.500" textLength="289">Woolloongabba</text>
            <text x="2817" y="2116.500" textLength="246">Highgate Hill</text>
            <text x="2641" y="1315" textLength="116">Petrie</text>
            <text x="2524" y="1285" textLength="40">on</text>
            <text x="3743" y="1951.500" textLength="230">East Brisbane</text>
          </g>
          <g class="label city"><text x="2905" y="1563" textLength="428">Brisbane</text></g>
          <g class="label hollow"><text x="3023" y="1640" textLength="353">FROG'S HOLLOW</text></g>

          <g class="signs">
            <defs>
              <path id="shield" d="M-17 -20H17C19 -12 19 -6 18.500 0C18 9 9 17 0 20C-9 17 -18 9 -18.500 0C-19 -6 -19 -12 -17 -20Z" fill="#4679c1"/>
              <g id="train"><rect x="-15" y="-15" width="30" height="30" rx="4" fill="#fff"/><rect x="-13.500" y="-13.500" width="27" height="27" rx="3" fill="#54bafa"/><path d="M-8.500 -5Q-8.500 -9.500 -4 -9.500H4Q8.500 -9.500 8.500 -5V3.500Q8.500 6.500 5 6.500L8 10H4.500L2.500 7.500H-2.500L-4.500 10H-8L-5 6.500Q-8.500 6.500 -8.500 3.500Z" fill="#fff"/><path d="M-6 -5.500H-1V-.5H-6ZM1 -5.500H6V-.5H1ZM-5.500 2H-2.500V4.500H-5.500ZM2.500 2H5.500V4.500H2.500Z" fill="#54bafa"/></g>
            </defs>
            <g transform="translate(3575 520)"><use href="#shield"/><text y="8">26</text></g>
            <g transform="translate(3273 630)"><use href="#shield"/><text y="8">15</text></g>
            <g transform="translate(3635.500 735.500)"><use href="#shield"/><text y="8">25</text></g>
            <g transform="translate(3539 855)"><use href="#shield"/><text y="8">10</text></g>
            <g transform="translate(3479 866)"><use href="#shield"/><text y="8">26</text></g>
            <g transform="translate(3419 963)"><use href="#shield"/><text y="8">26</text></g>
            <g transform="translate(3520 1036)"><use href="#shield"/><text y="8">25</text></g>
            <g transform="translate(2667 1107)"><use href="#shield"/><text y="8">31</text></g>
            <g transform="translate(3162 1062)"><use href="#shield"/><text y="8">10</text></g>
            <g transform="translate(2842 1365)"><use href="#shield"/><text y="8">10</text></g>
            <g transform="translate(3341 1183)"><use href="#shield"/><text y="8">15</text></g>
            <g transform="translate(3521 1776)"><use href="#shield"/><text y="8">23</text></g>
            <g transform="translate(3724.500 1861)"><use href="#shield"/><text y="8">23</text></g>
            <g transform="translate(3111 1970)"><use href="#shield"/><text y="8">10</text></g>
            <g transform="translate(3560 2020)"><use href="#shield"/><text y="8">95</text></g>
            <g transform="translate(3463 2094)"><use href="#shield"/><text y="8">41</text></g>
            <g transform="translate(3842 2134)"><use href="#shield"/><text y="8">41</text></g>
            <g fill="#7a9e52"><path d="M3315 743h48v28h-48zM3320 877h48v28h-48zM3050 1028h48v28h-48zM2897 1110h48v28h-48zM2788 1455h48v28h-48zM3412 1517h49v27h-49zM3086 1695h48v28h-48zM3312 2117h48v28h-48z"/></g>
            <g class="m"><text x="3339" y="764.500">M7</text><text x="3344" y="898.500">M7</text><text x="3074" y="1049.500">M3</text><text x="2921" y="1131.500">M5</text><text x="2812" y="1476.500">M3</text><text x="3436.500" y="1538">M7</text><text x="3110" y="1716.500">M3</text><text x="3336" y="2138">M3</text></g>
            <use href="#train" x="3484" y="730.500"/><use href="#train" x="3340" y="858"/><use href="#train" x="2954" y="1371.500"/><use href="#train" x="3147" y="1413"/><use href="#train" x="2540" y="1510.500"/><use href="#train" x="2929" y="1712"/><use href="#train" x="3054" y="1933"/>
            <circle cx="2926" cy="1372" r="10.500" fill="#ebb23c"/><path d="M2920.500 1366.500H2931.500M2926 1366.500V1378.500" stroke="#fff" stroke-width="3"/>
          </g>
          <text class="logo" x="2548" y="2125" textLength="156">Google</text>
          <g class="legal"><rect x="3270" y="2115" width="619" height="26"/><text x="3282" y="2139.500" textLength="187">Map data ©2020</text><text x="3497" y="2139.500" textLength="148">Terms of Use</text><text x="3673" y="2139.500" textLength="208">Report a map error</text></g>
        </svg>

        <div class="callout ivory"><div><b>Ivory Street Morning Out...</b><span>2 hours (7:00 am)</span></div><svg><use href="#sun"/></svg></div>
        <div class="callout wickham"><div><b>Wickham Morning Outre...</b><span>3 hours (6:00 am)</span></div><svg><use href="#sun"/></svg></div>
        <div class="fullscreen"><svg viewBox="0 0 42 42"><path d="M2.800 14.500V2.800H14.500M27.500 2.800H39.200V14.500M39.200 27.500V39.200H27.500M14.500 39.200H2.800V27.500" fill="none" stroke="#666" stroke-width="5.600"/></svg></div>
        <div class="zoom"><svg viewBox="0 0 40 40"><path d="M0 20H40M20 0V40" stroke="#666" stroke-width="8.500"/></svg><hr><svg viewBox="0 0 40 40"><path d="M0 20H40" stroke="#666" stroke-width="8.500"/></svg></div>
      </section>
    </div>
  </main>
  <svg class="pointer" viewBox="1130 1025 110 270" preserveAspectRatio="none"><path d="M1138 1055C1136 1030 1150 1028 1154 1052L1174 1125L1171 1095C1172 1072 1184 1072 1189 1088L1190 1106L1188 1080C1190 1052 1202 1052 1206 1075L1208 1092L1206 1070C1207 1048 1218 1046 1221 1064L1232 1140L1229 1190L1233 1238L1224 1250L1214 1228L1213 1262L1194 1286L1188 1262L1170 1245L1140 1195C1134 1170 1141 1148 1152 1156L1166 1170Z" fill="#f5f5f5"/><path d="M1186 1160L1195 1218M1197 1145L1207 1205M1209 1132L1218 1192"/></svg>
</div>
</body>
</html>
```
FILE: styles.css
```css
* { box-sizing: border-box; }
body { margin: 0; background: #fff; font-family: Inter, "Liberation Sans", sans-serif; color: #000; }
h1, h2, h3, p { margin: 0; font-weight: 400; }
.defs { display: block; }
.window { position: relative; display: flex; width: 3104px; height: 1940px; margin: 44px 0 0 496px; border: 8px solid #e8e8e8; border-bottom-width: 7px; border-radius: 58px; overflow: hidden; }

/* sidebar */
.sidebar { width: 572px; flex: none; background: #242424; }
.brand-row { height: 122px; display: flex; align-items: flex-start; justify-content: space-between; padding: 10px 39px 0 28px; }
.brand { font-size: 50px; line-height: 62px; font-weight: 600; color: #ef7059; -webkit-text-stroke: 2px #ef7059; stroke-linejoin: round; }
.collapse { width: 66px; height: 30px; margin-top: 25px; }
.nav-item { height: 105.300px; width: 533px; display: flex; align-items: center; padding-left: 28.500px; font-size: 31.800px; color: #8c8c8c; }
.slot { width: 110.500px; display: flex; flex: none; }
.icon { width: 56px; height: 56px; fill: #929292; }
.avatar { display: flex; align-items: center; justify-content: center; border-radius: 50%; background: #215383; color: #fff; font-weight: 700; }
.avatar-sm { width: 62px; height: 62px; border: 2px solid #e8e8e8; font-size: 22px; }
.nav-title { margin-top: 19px; width: 533px; height: 131px; border-top: 2px solid #202020; padding: 50px 0 0 29px; font-size: 31.200px; line-height: 46px; font-weight: 500; color: #fff; }
.nav-item.active { color: #242424; font-size: 33px; font-weight: 600; border-radius: 0 19px 19px 0; background: linear-gradient(90deg, #fff4e3, #fffaf2 45%, #fff); box-shadow: 0 12px 30px rgba(255,255,255,.13), -250px 14px 90px rgba(255,255,255,.33); clip-path: inset(0 0 -160px 0); }
.nav-item.active .icon { fill: #242424; }
.nav-item.active ~ .nav-item { position: relative; }

/* top of the page */
.main { flex: 1; min-width: 0; display: flex; flex-direction: column; }
.header { position: relative; height: 103px; flex: none; display: flex; align-items: center; justify-content: space-between; padding: 0 38.500px 0 34px; background: linear-gradient(90deg, #41303d, #342b3b 42%, #26263d 72%, #222540); color: #fff; }
.stars { position: absolute; inset: 0; width: 2516px; height: 103px; }
.crumbs { font-size: 35px; letter-spacing: -.6px; line-height: 46px; margin-top: -7px; }
.avatar-lg { width: 74px; height: 74px; border: 5.500px solid #bdbdbd; font-size: 23.500px; margin-top: -7px; }
.tabs { height: 114px; flex: none; display: flex; gap: 36px; padding-left: 72px; border-bottom: 3px solid #dfdfdf; }
.tab { padding: 0 37px; line-height: 112px; font-size: 29.600px; color: #4a4a4a; }
.tab.on { width: 244px; padding: 0; text-align: center; color: #7577f6; border-bottom: 4px solid #7577f6; }
.filters { height: 148px; flex: none; display: flex; align-items: center; gap: 37px; padding-left: 46px; border-bottom: 3px solid #e9e9e9; }
.search { width: 436px; height: 85px; margin-right: 2px; border: 3px solid #c0c0c0; border-radius: 43px; display: flex; align-items: center; padding-left: 17px; font-size: 34px; color: #a3a3a3; }
.search svg { width: 44px; height: 44px; fill: #b5b5b5; margin-right: 18px; }
.chip { height: 85px; border: 2.500px solid #d3d7de; border-radius: 10px; display: flex; align-items: center; justify-content: space-between; padding: 0 17px 0 28px; font-size: 31.600px; font-weight: 500; white-space: nowrap; }
.caret { border: 11.500px solid transparent; border-top-color: #757575; border-bottom: 0; margin-top: 3px; }
.day { width: 211px; font-weight: 600; font-size: 30.800px; }
.area { width: 397px; color: #7577f6; border-color: #7577f6; }
.area .caret { border-top-color: #7577f6; }
.duration { width: 281px; }
.time { width: 222px; color: #222; }

/* activity list */
.content { flex: 1; display: flex; min-height: 0; }
.list { width: 1260px; flex: none; }
.intro { padding: 44px 55px 0 54px; }
.intro h1 { padding-bottom: 22px; border-bottom: 3px solid #dedede; font-size: 43px; line-height: 60px; letter-spacing: -.63px; text-indent: -2px; }
.found { margin: 31px 0 0 -2px; font-size: 31.300px; line-height: 46px; color: #777; }
.card { position: relative; }
.card:not(.hover) { height: 371px; padding-top: 70px; }
.badge { display: block; width: 320px; height: 52px; margin-left: 54px; padding-left: 5px; background: #92d077; color: #fff; font-size: 28.200px; font-weight: 600; line-height: 57px; white-space: nowrap; }
.body { display: flex; padding: 21px 0 0 66px; }
.info { flex: 1; white-space: nowrap; }
.info h3 { font-size: 43px; line-height: 60px; letter-spacing: -.6px; margin-bottom: 7px; }
.hover .info h3 { letter-spacing: -.46px; }
.when, .where { font-size: 31.600px; line-height: 46px; letter-spacing: -.43px; }
.where { color: #7d7d7d; }
.period { margin-top: -8px; display: flex; flex-direction: column; align-items: flex-end; font-size: 27px; line-height: 40px; }
.period svg { width: 74px; height: 74px; margin-bottom: 4px; }
.locate { width: 132.500px; padding: 79px 0 0 58.500px; height: 134px; }
.locate svg { display: block; width: 55px; height: 55px; fill: #9a9a9a; }
.hover { height: 337px; background: #f5f5f5; border-top: 3px solid #dfdfdf; border-bottom: 3px solid #dfdfdf; }
.hover .body { padding-top: 59px; }
.vacancy { display: flex; align-items: center; margin: 32px 0 0 53px; font-size: 30.800px; letter-spacing: -.2px; line-height: 46px; }
.vacancy svg { width: 35px; height: 35px; fill: #b5b5b5; margin-right: 17.500px; }

/* map */
.map { position: relative; flex: 1; overflow: hidden; }
.canvas { display: block; width: 1256px; height: 1561px; }
.canvas path { vector-effect: non-scaling-stroke; }
.signs path { vector-effect: none; }
.land { fill: #e7e7e7; }
.campus { fill: #e9eaef !important; }
.clinic { fill: #f8e7e5; }
.shops { fill: #fcf4dc; }
.civic { fill: #ebe9e4; }
.yard { fill: #d5d6da; }
.parks { fill: #cee9ca; }
.lawn { fill: #d0efcc; }
.water { fill: #b2d9fd; }
.creeks { fill: none; stroke: #b2d9fd; stroke-width: 8px; }
.thin { stroke-width: 4px; }
.wide { stroke-width: 12px; }
.wider { stroke-width: 18px; }
.ferry { fill: none; stroke: #9fbcec; stroke-width: 2.200px; stroke-dasharray: 14 7; }
.street, .street-edge, .road, .road-edge, .arterial, .arterial-edge, .motorway, .motorway-edge { fill: none; stroke-linejoin: round; }
.street-edge { stroke: #dcdde1; stroke-width: 5.600px; }
.street { stroke: #fff; stroke-width: 4.200px; }
.road-edge { stroke: #dadbe0; stroke-width: 11px; }
.road { stroke: #fff; stroke-width: 9.400px; }
.arterial-edge { stroke: #f3d37a; stroke-width: 13px; }
.arterial { stroke: #fdf0b6; stroke-width: 9.200px; }
.motorway-edge { stroke: #efc96a; stroke-width: 16px; }
.motorway { stroke: #fde8a6; stroke-width: 11.500px; }
.rail { fill: none; stroke: #d5d6da; stroke-width: 4px; }
.fat { stroke-width: 8px; }
.band { stroke-width: 13px; }
.tunnel { stroke: #dcdcdc; }
.bridge { stroke: #d6d6d8; stroke-width: 12px; }
.label { font-family: Roboto, "Liberation Sans", sans-serif; stroke: #fff; stroke-width: 5px; stroke-opacity: .85; stroke-linejoin: round; paint-order: stroke; }
.label path { stroke: none; }
.road-label { font-size: 28px; font-weight: 500; fill: #69727a; }
.arterial-label { font-size: 32px; fill: #7b4a14; font-weight: 500; stroke: #fff8e0; }
.river-label { font-size: 30px; font-style: italic; fill: #5f87cf; stroke: none; }
.suburb { font-size: 34.500px; fill: #5b636e; stroke-width: 6px; }
.city { font-size: 70px; font-weight: 500; fill: #9ea4ac; stroke-width: 7px; }
.hollow { font-size: 34px; font-weight: 500; fill: #7b8ba6; stroke-width: 6px; }
.signs { font: 500 22px Roboto, "Liberation Sans", sans-serif; fill: #fff; text-anchor: middle; }
.m { font-weight: 700; font-size: 21px; }
.logo { font: 500 48px Inter, sans-serif; fill: #fff; fill-opacity: .9; stroke: #8a8a8a; stroke-opacity: .6; stroke-width: 2.500px; paint-order: stroke; }
.legal { font: 22px Roboto, "Liberation Sans", sans-serif; fill: #444; }
.legal rect { fill: #f5f5f5; fill-opacity: .7; }
.callout { position: absolute; width: 567px; height: 114px; border-radius: 57px; display: flex; align-items: center; justify-content: space-between; padding: 0 26px 0 36px; background: #fff; box-shadow: 0 8px 22px rgba(0,0,0,.4); }
.callout::after { content: ""; position: absolute; top: 100%; margin-top: -1px; border: 14px solid transparent; border-top-color: #fff; border-bottom: 0; }
.callout b, .callout span { display: block; font-weight: 400; white-space: nowrap; line-height: 46px; font-size: 30.700px; }
.callout b { font-size: 31.500px; }
.callout span { color: #424242; }
.callout svg { width: 75px; height: 75px; }
.ivory { left: 546px; top: 557px; }
.ivory b { color: #ef7059; }
.ivory::after { left: 270px; }
.wickham { left: 149px; top: 696px; background: #000; color: #fff; }
.wickham span { color: #fff; }
.wickham::after { left: 270px; border-top-color: #000; }
.fullscreen, .zoom { position: absolute; background: #fff; border-radius: 5px; box-shadow: 0 2px 9px rgba(0,0,0,.3); }
.fullscreen { left: 1150px; top: 24px; width: 92px; height: 92px; display: grid; place-items: center; }
.fullscreen svg { width: 42px; height: 42px; }
.zoom { left: 1149px; top: 1326px; width: 92px; height: 185px; display: flex; flex-direction: column; align-items: center; justify-content: space-between; padding: 26px 0 24px; }
.zoom svg { width: 40px; height: 40px; }
.zoom hr { width: 68px; height: 2px; border: 0; margin: 0; background: #e6e6e6; }
.pointer { position: absolute; left: 1499.500px; top: 1224px; width: 91px; height: 83px; overflow: visible; }
.pointer path { fill-rule: nonzero; stroke: #000; stroke-width: 3px; stroke-linejoin: round; vector-effect: non-scaling-stroke; }
```
